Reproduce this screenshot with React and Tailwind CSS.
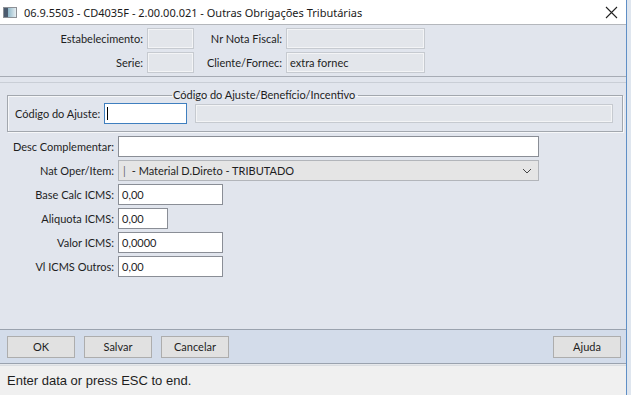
import React from "react";

const F = { fontFamily: 'Lato, "Noto Sans", sans-serif' };

function Label({ children, w }) {
  return (
    <div className={`${w} shrink-0 text-right text-[11px] leading-none text-[#1e1e1e] pr-[4px] whitespace-nowrap`}>{children}</div>
  );
}

function Disabled({ w, children }) {
  return (
    <div className={`${w} h-[21px] border border-[#c6cad0] bg-[#e3e6eb] shadow-[inset_0_0_0_1px_#f3f4f6] text-[11px] leading-none flex items-center px-[3px] text-[#1e1e1e]`}>
      {children}
    </div>
  );
}

function Input({ w, children }) {
  return (
    <div className={`${w} h-[21px] border border-[#8a8e96] bg-white text-[11px] leading-none flex items-center px-[3px] text-[#1e1e1e]`}>
      {children}
    </div>
  );
}

function Row({ label, children }) {
  return (
    <div className="flex items-center h-[21px]">
      <Label w="w-[118px]">{label}</Label>
      {children}
    </div>
  );
}

function Btn({ children }) {
  return (
    <div className="w-[68px] h-[22px] border border-[#adadad] bg-[#e1e1e1] text-[11px] leading-none flex items-center justify-center text-[#1e1e1e]">
      {children}
    </div>
  );
}

export default function App() {
  return (
    <div className="w-[631px] h-[395px] flex bg-[#dfe6ef] overflow-hidden" style={F}>
      <div className="w-[627px] h-full flex flex-col border-r border-[#5f8fc6] bg-[#e1e5ed]">
        {/* Title bar */}
        <div className="h-[25px] shrink-0 bg-white border-b border-[#b4b7bc] flex items-center relative">
          <div className="ml-[3px] w-[14px] h-[11px] border border-[#8c9096] flex">
            <div className="w-[4px] h-full bg-[#4b5b6e]" />
            <div className="flex-1 h-full bg-gradient-to-r from-[#8fb8c9] to-[#e6eef2]" />
          </div>
          <div className="ml-[7px] text-[11px] leading-none text-[#1a1a1a]" style={{ fontFamily: '"Noto Sans", sans-serif' }}>
            06.9.5503 - CD4035F - 2.00.00.021 - Outras Obrigações Tributárias
          </div>
          <svg className="absolute left-[605px] top-[6px]" width="13" height="13" viewBox="0 0 13 13">
            <path d="M1 1 L12 12 M12 1 L1 12" stroke="#222" strokeWidth="1.1" />
          </svg>
        </div>

        {/* Header */}
        <div className="shrink-0 pt-[3px] pb-[3px] border-b border-[#a7acb5] flex flex-col gap-[3px]">
          <div className="flex items-center">
            <Label w="w-[147px]">Estabelecimento:</Label>
            <Disabled w="w-[47px]" />
            <Label w="w-[92px]">Nr Nota Fiscal:</Label>
            <Disabled w="w-[139px]" />
          </div>
          <div className="flex items-center">
            <Label w="w-[147px]">Serie:</Label>
            <Disabled w="w-[47px]" />
            <Label w="w-[92px]">Cliente/Fornec:</Label>
            <Disabled w="w-[139px]">extra fornec</Disabled>
          </div>
        </div>
        <div className="shrink-0 h-[6px] border-b border-[#c9ced6]" />

        {/* Group box */}
        <fieldset className="mx-[7px] mt-[4px] w-[616px] h-[45px] border border-[#a2a7ae] shadow-[inset_1px_1px_0_#f6f7f9,1px_1px_0_#f6f7f9] px-[7px]">
          <legend className="ml-[157px] text-[11px] leading-[16px] text-[#1e1e1e] pl-[1px] pr-[3px]">
            Código do Ajuste/Benefício/Incentivo
          </legend>
          <div className="flex items-center mt-[0px]">
            <div className="text-[11px] leading-none text-[#1e1e1e] pr-[4px] w-[89px] whitespace-nowrap">Código do Ajuste:</div>
            <div className="w-[83px] h-[21px] border border-[#3f7fbf] bg-white flex items-center pl-[2px]">
              <div className="w-[1px] h-[13px] bg-black" />
            </div>
            <div className="ml-[8px] w-[418px] h-[19px] border border-[#c6cad0] bg-[#e3e6eb] shadow-[inset_0_0_0_1px_#f3f4f6]" />
          </div>
        </fieldset>

        {/* Rows */}
        <div className="mt-[4px] flex flex-col gap-[3px]">
          <Row label="Desc Complementar:">
            <Input w="w-[421px]" />
          </Row>
          <Row label="Nat Oper/Item:">
            <div className="w-[421px] h-[21px] border border-[#b2b5ba] bg-[#e5e5e5] text-[11px] leading-none flex items-center pl-[4px] pr-[6px] text-[#1e1e1e]">
              <span className="text-[#6b6b6b]">|</span>
              <span className="ml-[6px]">- Material D.Direto - TRIBUTADO</span>
              <svg className="ml-auto" width="10" height="6" viewBox="0 0 10 6">
                <path d="M1 1 L5 5 L9 1" fill="none" stroke="#444" strokeWidth="1" />
              </svg>
            </div>
          </Row>
          <Row label="Base Calc ICMS:">
            <Input w="w-[105px]">0,00</Input>
          </Row>
          <Row label="Aliquota ICMS:">
            <Input w="w-[50px]">0,00</Input>
          </Row>
          <Row label="Valor ICMS:">
            <Input w="w-[105px]">0,0000</Input>
          </Row>
          <Row label="Vl ICMS Outros:">
            <Input w="w-[105px]">0,00</Input>
          </Row>
        </div>

        <div className="flex-1" />

        {/* Button bar */}
        <div className="shrink-0 h-[35px] border-t border-b border-[#9aa2ae] bg-[#d3dcea] flex items-center px-[7px] gap-[9px]">
          <Btn>OK</Btn>
          <Btn>Salvar</Btn>
          <Btn>Cancelar</Btn>
          <div className="ml-auto mr-[-2px]">
            <Btn>Ajuda</Btn>
          </div>
        </div>
        <div className="shrink-0 h-[2px] bg-[#e6e8eb] border-b border-[#dadde1]" />

        {/* Status bar */}
        <div className="flex-none h-[29px] bg-[#f0f0f0] flex items-center pl-[7px] text-[13px] leading-none text-[#1e1e1e]" style={{ fontFamily: '"Liberation Sans", Arial, sans-serif' }}>
          Enter data or press ESC to end.
        </div>
      </div>
    </div>
  );
}
